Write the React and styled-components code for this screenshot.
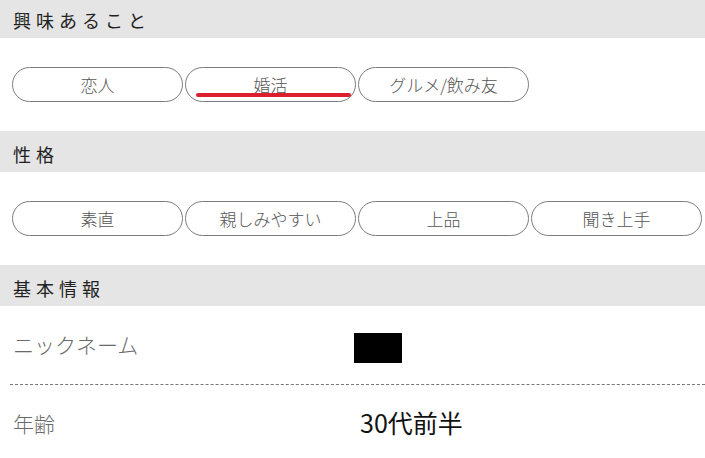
import React from 'react';
import styled, { createGlobalStyle } from "styled-components";

const GlobalStyle = createGlobalStyle`
  body {
    margin: 0;
    background: #fff;
    font-family: "Noto Sans CJK JP", "Noto Sans", sans-serif;
  }
`;

const interests = [
    {label: '恋人'},
    {label: '婚活', marked: true},
    {label: 'グルメ/飲み友'},
];

const traits = [
    {label: '素直'},
    {label: '親しみやすい'},
    {label: '上品'},
    {label: '聞き上手'},
];

function TagList({tags}) {
    return (
        <Tags>
            {tags.map(tag => (
                <Tag key={tag.label}>
                    {tag.label}
                    {tag.marked && <Underline />}
                </Tag>
            ))}
        </Tags>
    );
}

export default function App() {
    return (
        <Page>
            <GlobalStyle />
            <SectionTitle>興味あること</SectionTitle>
            <TagList tags={interests} />

            <SectionTitle>性格</SectionTitle>
            <TagList tags={traits} />

            <SectionTitle>基本情報</SectionTitle>
            <InfoList>
                <InfoRow dashed>
                    <InfoLabel>ニックネーム</InfoLabel>
                    <InfoValue><Hidden /></InfoValue>
                </InfoRow>
                <InfoRow>
                    <InfoLabel>年齢</InfoLabel>
                    <InfoValue>30代前半</InfoValue>
                </InfoRow>
            </InfoList>
        </Page>
    );
}

const Page = styled.div`
  margin-top: -3px;
  width: 705px;
`;

const SectionTitle = styled.h2`
  margin: 0;
  height: 41px;
  box-sizing: border-box;
  padding: 11px 0 0 13px;
  background-color: #e5e5e5;
  color: #222;
  font-size: 18px;
  font-weight: normal;
  line-height: 24px;
  letter-spacing: 5px;
`;

const Tags = styled.div`
  display: grid;
  grid-template-columns: repeat(4, 171px);
  gap: 2px;
  padding: 29px 4px 29px 12px;
`;

const Tag = styled.div`
  position: relative;
  height: 35px;
  box-sizing: border-box;
  border: 1px solid #7d7d7d;
  border-radius: 18px;
  display: flex;
  align-items: center;
  justify-content: center;
  color: #555;
  font-size: 17px;
  font-weight: 300;
`;

const Underline = styled.span`
  position: absolute;
  left: 10px;
  right: 4px;
  bottom: 4px;
  height: 4px;
  border-radius: 2px;
  background-color: #dc1f2e;
`;

const InfoList = styled.div`
  padding-left: 10px;
`;

const InfoRow = styled.div`
  display: grid;
  grid-template-columns: 344px 1fr;
  align-items: center;
  height: 78px;
  border-bottom: ${props => props.dashed ? '1px dashed #777' : '0'};
`;

const InfoLabel = styled.div`
  padding-left: 3px;
  color: #6a6a6a;
  font-size: 21px;
  font-weight: 300;
  margin-bottom: 3px;
`;

const InfoValue = styled.div`
  color: #111;
  font-size: 25px;
  display: flex;
  align-items: center;
  padding-left: 6px;
  margin-bottom: 4px;
`;

const Hidden = styled.span`
  display: block;
  width: 48px;
  height: 30px;
  margin: 10px 0 0 -6px;
  background-color: #000;
`;
